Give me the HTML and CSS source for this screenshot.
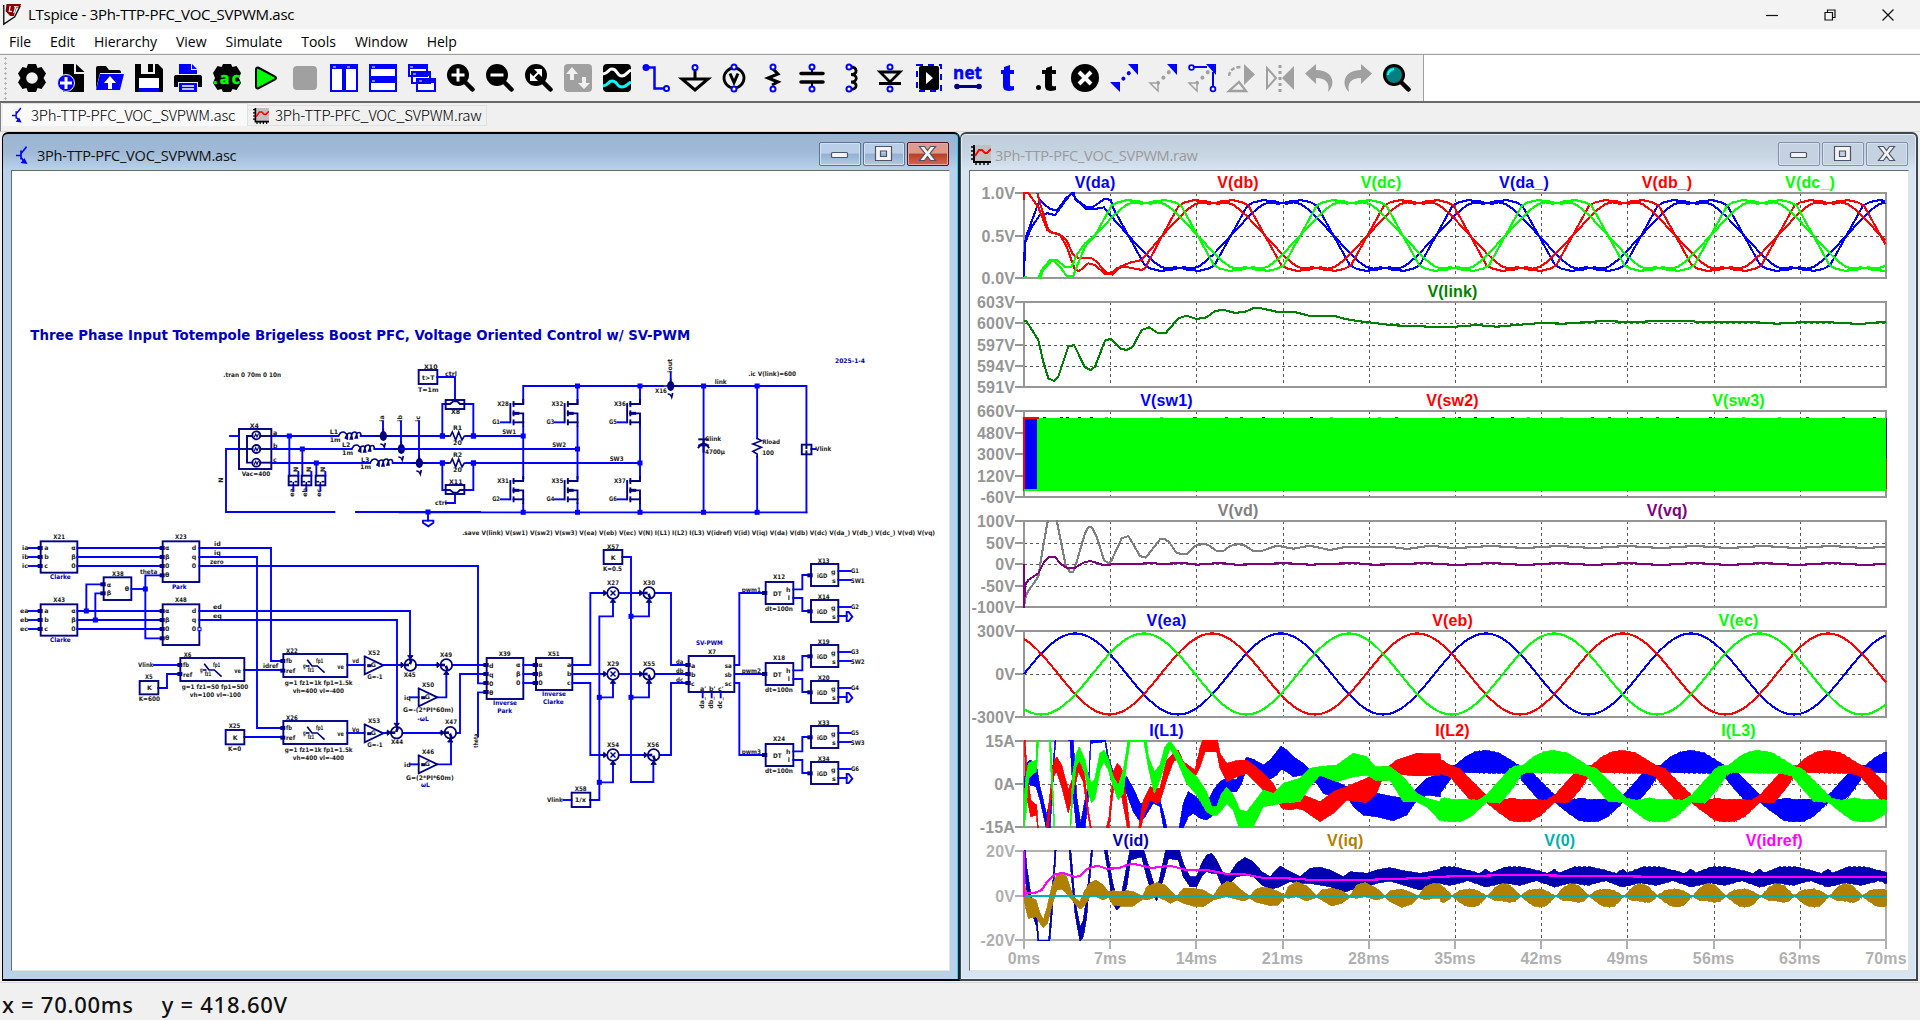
FILE: index.html
```html
<!DOCTYPE html>
<html lang="en">
<head>
<meta charset="utf-8">
<title>LTspice - 3Ph-TTP-PFC_VOC_SVPWM.asc</title>
<link rel="stylesheet" href="styles.css">
</head>
<body>
<svg class="defs" width="0" height="0">
  <symbol id="i-bjt" viewBox="0 0 14 19"><path d="M1 10h5M6 5v9M6 8l5-6V1M6 12l4 5" fill="none" stroke="#0000ff" stroke-width="1.7"/><path d="M5.500 17.500l7 1-3-6z" fill="#0000ff"/></symbol>
  <symbol id="i-raw" viewBox="0 0 20 20"><path d="M2 0h18v17H2z" fill="#c0c0c0"/><path d="M3 0v17h17" fill="none" stroke="#000" stroke-width="2"/><path d="M0 2h3M0 6h3M0 10h3M0 14h3M5 20v-3M9 20v-3M13 20v-3M17 20v-3" stroke="#000" stroke-width="1.500"/><path d="M4 11l4-6h3l3 3h2l4-4" fill="none" stroke="#f00" stroke-width="2"/></symbol>
  <symbol id="i-lens" viewBox="0 0 28 28"><circle cx="11" cy="11" r="11"/><path d="M18 18l7.500 7.500" stroke="#000" stroke-width="4.500" stroke-linecap="round"/></symbol>
</svg>

<header class="titlebar">
  <svg class="logo" viewBox="0 0 22 24"><path d="M2 1v21L14 14 20 2" fill="none" stroke="#111" stroke-width="1.500"/><path d="M5 0h16l-2 4h-3l-3 9h-4L4 8l1-8" fill="#8b0000"/><path d="M9 2L8 8h3M13 3h5M15 3l-2 7" fill="none" stroke="#fff" stroke-width="1.300"/></svg>
  <span class="title-text">LTspice - 3Ph-TTP-PFC_VOC_SVPWM.asc</span>
  <div class="sys">
    <svg viewBox="0 0 14 14"><path d="M1 7.500h12" /></svg>
    <svg viewBox="0 0 14 14"><path d="M2 4.500h7.500V12H2zM4.500 4V2H12v7.500H10"/></svg>
    <svg viewBox="0 0 14 14"><path d="M1.500 1.500l11 11M12.500 1.500l-11 11"/></svg>
  </div>
</header>
<nav class="menubar"><span>File</span><span>Edit</span><span>Hierarchy</span><span>View</span><span>Simulate</span><span>Tools</span><span>Window</span><span>Help</span></nav>

<div class="toolrow"><div class="toolbar">
  <svg viewBox="0 0 28 28"><path d="M10 0h8l1.500 4 4-1 4.500 6.500-2.500 4.500 2.500 4.500-4.500 6.500-4-1-1.500 4h-8l-1.500-4-4 1L0 18.500 2.500 14 0 9.500 4.500 3l4 1z"/><circle cx="14" cy="14" r="5.800" fill="#f0f0f0"/></svg>
  <svg viewBox="0 0 28 28"><path d="M6 0h11v10h10v18H6z"/><path d="M19 0l8.500 8H19z"/><circle cx="9" cy="19" r="8.500" fill="#00f" stroke="#f0f0f0" stroke-width="1"/><path d="M9 13v12M3 19h12" stroke="#fff" stroke-width="3"/></svg>
  <svg viewBox="0 0 28 28"><path d="M0 25V4q0-2 2-2h8l3 4h10q2 0 2 3H4z"/><path d="M4 10h24l-4 16H0z" fill="#00f"/><path d="M14 12l6 7h-4v6h-4v-6H8z" fill="#fff"/></svg>
  <svg viewBox="0 0 28 28"><path d="M0 0h6v10h14V0h3l5 5v23H0z"/><path d="M13 0h5v8h-5z"/><path d="M4 14h20v14H4z" fill="#fff"/><path d="M4 24h20v4H4z" fill="#00f"/></svg>
  <svg viewBox="0 0 28 28"><path d="M5 10V0h12v6h6v4z" fill="#00f"/><path d="M18 0l5 5h-5z" fill="#00f"/><path d="M0 23V13q0-2 2-2h24q2 0 2 2v10h-4v-5H4v5z"/><path d="M5 19h18v9H5z" fill="#00f"/><path d="M8 22h12M8 25h12" stroke="#fff" stroke-width="1.300"/></svg>
  <svg viewBox="0 0 28 28"><path d="M10 0h8l1.500 3 4-1 4.500 7-2 5 2 5-4.500 7-4-1-1.500 3h-8l-1.500-3-4 1L0 19l2-5-2-5 4.500-7 4 1z"/><text x="0" y="20" class="ac" textLength="27">.ac</text></svg>
  <svg viewBox="0 0 28 28"><path d="M5 3.500l17 9q2 1.500 0 3l-17 9q-2 0-2-2v-17q0-2 2-2z" transform="translate(1)" fill="#00ff00" stroke="#000" stroke-width="2"/></svg>
  <svg viewBox="0 0 28 28"><rect x="2" y="2" width="24" height="24" rx="4" fill="#a0a0a0"/></svg>
  <svg viewBox="0 0 28 28"><g fill="#fff" stroke="#00f" stroke-width="2"><path d="M1 1h12v26H1zM15 1h12v26H15z"/></g><path d="M0 0h28v5H0z" fill="#00f"/><path d="M3 3h3M17 3h3" stroke="#fff"/></svg>
  <svg viewBox="0 0 28 28"><g fill="#fff" stroke="#00f" stroke-width="2"><path d="M1 1h26v12H1zM1 15h26v12H1z"/></g><path d="M0 0h28v5H0zM0 14h28v5H0z" fill="#00f"/><path d="M3 3h3M3 17h3" stroke="#fff"/></svg>
  <svg viewBox="0 0 28 28"><g fill="#fff" stroke="#00f" stroke-width="2"><path d="M1 1h18v11H1zM4 8h18v11H4zM9 15h18v12H9z"/></g><path d="M0 0h20v5H0zM3 7h20v5H3zM8 14h20v5H8z" fill="#00f"/><path d="M2 3h3M5 10h3M11 17h3" stroke="#fff"/></svg>
  <svg viewBox="0 0 28 28"><use href="#i-lens"/><path d="M11 4.500v13M4.500 11h13" stroke="#fff" stroke-width="3"/></svg>
  <svg viewBox="0 0 28 28"><use href="#i-lens"/><path d="M4.500 11h13" stroke="#fff" stroke-width="3"/></svg>
  <svg viewBox="0 0 28 28"><use href="#i-lens"/><path d="M7 15l8-8" stroke="#fff" stroke-width="2"/><path d="M9 5h8v8zM5 9v8h8z" fill="#fff"/></svg>
  <svg viewBox="0 0 28 28"><rect width="28" height="28" rx="4" fill="#a0a0a0"/><path d="M8 3l6 7h-4v6H6v-6H2zM20 25l6-6h-4v-6h-4v6h-4z" fill="#f0f0f0"/></svg>
  <svg viewBox="0 0 28 28"><rect width="28" height="28" rx="4"/><path d="M0 10c6-1 5-5 9-5 6 0 4 7 10 7 4 0 5-4 9-6" fill="none" stroke="#fff" stroke-width="3"/><path d="M0 22c6-1 5-5 9-5 6 0 4 6 10 6 4 0 5-3 9-5" fill="none" stroke="#00ffff" stroke-width="3"/></svg>
  <svg viewBox="0 0 28 28"><path d="M3 3.500h9.500v21H22" fill="none" stroke="#00f" stroke-width="2.500"/><circle cx="4" cy="3.500" r="3.500" fill="#00f"/><circle cx="24.500" cy="24.500" r="2.500" fill="#fff" stroke="#00f" stroke-width="2"/></svg>
  <svg viewBox="0 0 28 28"><path d="M14 6v9M1 15h26L14 26z" fill="#f0f0f0" stroke="#000" stroke-width="3"/><circle cx="14" cy="3.500" r="2.500" fill="#fff" stroke="#00f" stroke-width="2"/></svg>
  <svg viewBox="0 0 28 28"><circle cx="14" cy="14" r="10" fill="none" stroke="#000" stroke-width="2.800"/><path d="M10 9.500l4 9 4-9" fill="none" stroke="#000" stroke-width="3"/><g fill="#fff" stroke="#00f" stroke-width="2"><circle cx="14" cy="3" r="2.500"/><circle cx="14" cy="25" r="2.500"/></g></svg>
  <svg viewBox="0 0 28 28"><path d="M14 5l5 5-10 4 10 4-6 3" fill="none" stroke="#000" stroke-width="3"/><g fill="#fff" stroke="#00f" stroke-width="2"><circle cx="14" cy="3" r="2.500"/><circle cx="14" cy="25" r="2.500"/></g></svg>
  <svg viewBox="0 0 28 28"><path d="M3 9.500h22M3 18h22" stroke="#000" stroke-width="3.500" stroke-linecap="round"/><path d="M14 5v4M14 19v4" stroke="#000" stroke-width="2"/><g fill="#fff" stroke="#00f" stroke-width="2"><circle cx="14" cy="3" r="2.500"/><circle cx="14" cy="25" r="2.500"/></g></svg>
  <svg viewBox="0 0 28 28"><path d="M13 3c8 0 8 7.500 1 7.500 7 0 7 7.500 0 7.500 7 0 7 7.500-1 7.500" fill="none" stroke="#000" stroke-width="2.800"/><g fill="#fff" stroke="#00f" stroke-width="2"><circle cx="12" cy="3" r="2.500"/><circle cx="12" cy="25" r="2.500"/></g></svg>
  <svg viewBox="0 0 28 28"><path d="M4 8h20L14 18zM3 19.500h22" fill="#f0f0f0" stroke="#000" stroke-width="2.800"/><g fill="#fff" stroke="#00f" stroke-width="2"><circle cx="14" cy="3" r="2.500"/><circle cx="14" cy="25" r="2.500"/></g></svg>
  <svg viewBox="0 0 28 28"><rect x="4" y="2" width="20" height="24" rx="2"/><rect x="2" y="1" width="24" height="26" fill="none" stroke="#00f" stroke-width="2" stroke-dasharray="6 5"/><path d="M11 8l7 6-7 6z" fill="#fff"/></svg>
  <svg viewBox="0 0 28 28"><text x="-1" y="15" class="net" textLength="29">net</text><path d="M2 22.500h24" stroke="#000080" stroke-width="3"/><circle cx="3" cy="22.500" r="2.800" fill="#000080"/><circle cx="25" cy="22.500" r="2.800" fill="#000080"/></svg>
  <svg viewBox="0 0 28 28"><path d="M10 3l6-2v5h4v4h-4v11q0 2 4 1v4q-11 3-11-4V10H7V6h3z" transform="translate(1)" fill="#00f"/></svg>
  <svg viewBox="0 0 28 28"><path d="M14 4l6-2v4h4v4h-4v11q0 2 4 1v4q-11 3-11-4V10h-3V6h4z"/><circle cx="6.500" cy="23.500" r="2.500"/></svg>
  <svg viewBox="0 0 28 28"><circle cx="14" cy="14" r="14"/><path d="M8 8l12 12M20 8L8 20" stroke="#fff" stroke-width="4"/></svg>
  <svg viewBox="0 0 28 28"><path d="M8 20L20 8" stroke="#00f" stroke-width="4" stroke-linecap="round" stroke-dasharray=".1 7.500"/><path d="M18 0h10v11zM0 18h10v10z" fill="#00f"/></svg>
  <svg viewBox="0 0 28 28"><path d="M9 19L21 7" stroke="#a0a0a0" stroke-width="4" stroke-linecap="round" stroke-dasharray=".1 7.500"/><path d="M18 0h10v11z" fill="#00f"/><path d="M1 19h8v8z" fill="#f0f0f0" stroke="#a0a0a0" stroke-width="1.500"/></svg>
  <svg viewBox="0 0 28 28"><path d="M9 19L21 7" stroke="#a0a0a0" stroke-width="4" stroke-linecap="round" stroke-dasharray=".1 7.500"/><path d="M5 3h14M25 8v14" stroke="#00f" stroke-width="2"/><path d="M18 0h10v11z" fill="#00f"/><path d="M1 19h8v8z" fill="#f0f0f0" stroke="#a0a0a0" stroke-width="1.500"/><g fill="#fff" stroke="#00f" stroke-width="1.800"><circle cx="3.500" cy="3.500" r="2.400"/><circle cx="25" cy="25" r="2.400"/></g></svg>
  <svg viewBox="0 0 28 28"><path d="M17 0l11 10.500L17 21z" fill="#a0a0a0"/><path d="M2 27h17l-7-9zM2 14q0-11 12-11" fill="none" stroke="#a0a0a0" stroke-width="2.300"/><path d="M2 14q0-11 12-11" fill="none" stroke="#f0f0f0" stroke-width="3" stroke-dasharray="2 4"/></svg>
  <svg viewBox="0 0 28 28"><path d="M28 2v24L16 14z" fill="#a0a0a0"/><path d="M1 4v20l9-10z" fill="none" stroke="#a0a0a0" stroke-width="2"/><path d="M14 1v27" stroke="#a0a0a0" stroke-width="3" stroke-dasharray="3 3"/></svg>
  <svg viewBox="0 0 28 28"><path d="M0 9.500L11 0v6c18 0 20 15 12 22 2-9-2-14-12-14v6z" fill="#a0a0a0"/></svg>
  <svg viewBox="0 0 28 28"><path d="M28 9.500L17 0v6C-1 6-3 21 5 28 3 19 7 14 17 14v6z" fill="#a0a0a0"/></svg>
  <svg viewBox="0 0 28 28"><use href="#i-lens"/><circle cx="11" cy="11" r="8" fill="#008080"/><path d="M5 11q0-5 6-6" fill="none" stroke="#00ffff" stroke-width="2"/></svg>
</div></div>

<div class="tabs">
  <div class="tab active"><svg class="bjt"><use href="#i-bjt"/></svg><span>3Ph-TTP-PFC_VOC_SVPWM.asc</span></div>
  <div class="tab"><svg class="raw"><use href="#i-raw"/></svg><span>3Ph-TTP-PFC_VOC_SVPWM.raw</span></div>
</div>

<main class="mdi">
  <section class="win focused">
    <div class="wintitle">
      <svg class="bjt"><use href="#i-bjt"/></svg><span>3Ph-TTP-PFC_VOC_SVPWM.asc</span>
      <div class="btns">
        <i><svg viewBox="0 0 42 24"><rect x="12.500" y="10.500" width="16" height="5" rx="1"/></svg></i>
        <i><svg viewBox="0 0 42 24"><path d="M12.500 4.500h16v14h-16zM17.500 9v5.500h6V9z" fill-rule="evenodd"/></svg></i>
        <i class="close"><svg viewBox="0 0 42 24"><path d="M12.500 4.500h5l3 4 3-4h5l-5.500 7 5.500 7h-5l-3-4-3 4h-5l5.500-7z"/></svg></i>
      </div>
    </div>
    <div class="canvas"><svg id="schematic" viewBox="12 171 937 799"></svg></div>
  </section>
  <section class="win">
    <div class="wintitle">
      <svg class="raw"><use href="#i-raw"/></svg><span>3Ph-TTP-PFC_VOC_SVPWM.raw</span>
      <div class="btns">
        <i><svg viewBox="0 0 42 24"><rect x="12.500" y="10.500" width="16" height="5" rx="1"/></svg></i>
        <i><svg viewBox="0 0 42 24"><path d="M12.500 4.500h16v14h-16zM17.500 9v5.500h6V9z" fill-rule="evenodd"/></svg></i>
        <i><svg viewBox="0 0 42 24"><path d="M12.500 4.500h5l3 4 3-4h5l-5.500 7 5.500 7h-5l-3-4-3 4h-5l5.500-7z"/></svg></i>
      </div>
    </div>
    <div class="canvas"><svg id="plots" viewBox="970 171 938 799"></svg></div>
  </section>
</main>
<footer class="status"><span>x = 70.00ms</span><span>y = 418.60V</span></footer>
<script src="app.js"></script>
</body>
</html>
```
FILE: styles.css
```css
* { box-sizing: border-box; }
body {
  margin: 0; width: 1920px; height: 1020px; overflow: hidden;
  display: flex; flex-direction: column;
  background: #f0f0f0; color: #000;
  font-family: "Open Sans", "Noto Sans", sans-serif;
}
.defs { position: absolute; }
span { white-space: nowrap; }

.titlebar { height: 29px; flex: none; background: #f3f3f3; display: flex; align-items: center; padding-left: 1px; }
.logo { width: 22px; height: 22px; margin-right: 5px; }
.title-text { font-size: 15px; letter-spacing: -0.28px; line-height: 29px; }
.sys { margin-left: auto; display: flex; gap: 44px; padding-right: 25px; }
.sys svg { width: 14px; height: 14px; fill: none; stroke: #111; stroke-width: 1.2; }

.menubar { height: 25px; flex: none; background: #fff; border-bottom: 1px solid #f0f0f0; display: flex; gap: 19px; padding-left: 9px; font-size: 14px; line-height: 25px; letter-spacing: -0.02px; }

.toolrow { height: 49px; flex: none; background: #fff; border-top: 1px solid #a0a0a0; border-bottom: 2px solid #696969; display: flex; }
.toolbar { width: 1424px; background: #f0f0f0; border-right: 1px solid #a0a0a0; display: flex; gap: 11px; align-items: flex-start; padding: 9px 0 0 18px; background-image: radial-gradient(circle at 1.5px 1.5px, #b8b8b8 1.2px, transparent 1.4px); background-size: 6px 5px; background-repeat: repeat-y; background-position: 4px 2px; }
.toolbar svg { width: 28px; height: 28px; flex: none; overflow: visible; }
.ac { font: bold 16px "Open Sans", sans-serif; fill: #00ff00; stroke: #00ff00; stroke-width: .5; }
.net { font: bold 17px "Open Sans", sans-serif; fill: #0000ff; stroke: #0000ff; stroke-width: .5; }

.tabs { height: 29px; flex: none; display: flex; align-items: flex-start; padding-left: 2px; border-bottom: 1px solid #d8d8d8; border-left: 1px solid #808080; font: 300 15px "Noto Sans CJK JP", sans-serif; letter-spacing: -0.22px; }
.tab { display: flex; align-items: center; margin-top: 2px; width: 239px; height: 21px; border: 1px solid #e0e0e0; border-left: 0; padding-left: 5px; }
.tab span { line-height: 19px; position: relative; top: -1px; }
.tab.active { width: 245px; height: 23px; margin-top: 0; background: #f9f9f9; border-bottom: 0; padding-left: 8px; }
.tab .bjt { width: 12px; height: 16px; margin-right: 8px; }
.tab .raw { width: 16px; height: 16px; margin-right: 6px; }

.mdi { height: 850px; flex: none; display: grid; grid-template-columns: 958px 958px; background: #efefef; padding: 0 0 1px 2px; }
.win { border: 1px solid #40464e; border-width: 2px 2px 2px 1px; background: #d7e4f2; display: flex; flex-direction: column; padding: 0 7px 8px 8px; border-radius: 6px 6px 0 0; background-image: linear-gradient(#bfcddb 0, #c8d5e3 22px, #d7e4f2 36px); box-shadow: inset 0 0 0 1px #e4edf6; }
.win.focused { border-color: #000; background: #b9d1ea linear-gradient(#9ab4d2 0, #9fb9d6 18px, #b9d1ea 36px); border-right-color: #102530; box-shadow: inset -1px 0 #35cfee; padding-right: 8px; }
.wintitle { height: 36px; flex: none; display: flex; align-items: center; font-size: 14.6px; letter-spacing: -0.26px; padding: 5px 1px 0 2px; color: #9a9a9a; }
.wintitle > span { line-height: 30px; }
.focused .wintitle { color: #111; }
.wintitle .bjt { width: 14px; height: 20px; margin-right: 8px; }
.wintitle .raw { width: 20px; height: 20px; margin-right: 4px; }
.focused .wintitle { padding-left: 4px; }
.btns { margin-left: auto; display: flex; gap: 2px; }
.btns i { width: 42px; height: 24px; border: 1px solid #8292ac; border-radius: 2px; display: block; box-shadow: inset 0 0 0 1px #d6e1ee; background: #c5d2e1; margin-top: -2px; }
.btns svg { display: block; width: 42px; height: 24px; margin: -1px; fill: #f4f4f4; stroke: #4d5468; stroke-width: 1.2; }
.focused .btns i { background: linear-gradient(#b9cfe7 46%, #93b0d2 50%, #b0cae6); border-color: #5c7494; }
.focused .btns .close { background: linear-gradient(#dd9b90 46%, #b83f26 50%, #cf6a50); border-color: #4d1520; box-shadow: inset 0 0 0 1px #e9a99c; }
.canvas { flex: 1; background: #fff; border: 1px solid #696969; border-right-color: #e3e3e3; border-bottom-color: #e3e3e3; overflow: hidden; }
.canvas svg { display: block; width: 100%; height: 100%; }

.status { flex: 1; display: flex; gap: 28px; padding: 2px 0 0 2px; font: 500 22px "Noto Sans", sans-serif; letter-spacing: .72px; line-height: 38px; color: #111; border-top: 1px solid #d8d8d8; }

#schematic text { font: bold 6.3px "DejaVu Sans", Verdana, sans-serif; fill: #222; }
#schematic text.note { fill: #0000b4; }
#schematic text.head { font: bold 14.6px "DejaVu Sans Condensed", "DejaVu Sans", Tahoma, sans-serif; fill: #0000c0; }
#plots text { font: bold 16px "Liberation Sans", Arial, sans-serif; letter-spacing: .15px; }
```
FILE: app.js
```js
const NS = 'http://www.w3.org/2000/svg';
function el(parent, name, attrs, text) {
  const e = document.createElementNS(NS, name);
  for (const k in attrs) e.setAttribute(k, attrs[k]);
  if (text !== undefined) e.textContent = text;
  parent.appendChild(e);
  return e;
}

/* ---------------- Schematic ---------------- */
const sch = document.getElementById('schematic');
const WIRE = '#0000ff', SYM = '#000080';
let ox = 0, oy = 0, kx = 3;
// Each sheet section has its own origin and horizontal unit
function section(x, y, k = 3) { ox = x; oy = y; kx = k; }
const X = x => +(ox + x / kx).toFixed(2);
const Y = y => +(oy + y / 3).toFixed(2);
function line(str, color = WIRE, w = 1.9, fill = 'none') {
  str.split(';').forEach(s => {
    const n = s.trim().split(/[\s,]+/).map(Number), p = [];
    for (let i = 0; i < n.length; i += 2) p.push(X(n[i]) + ',' + Y(n[i + 1]));
    el(sch, 'polyline', { points: p.join(' '), fill, stroke: color, 'stroke-width': w, 'stroke-linecap': 'square' });
  });
}
const sym = (s, w = 1.9) => line(s, SYM, w);
function dots(s) {
  s.split(';').forEach(p => { const [x, y] = p.trim().split(' ').map(Number); el(sch, 'rect', { x: X(x) - 2.5, y: Y(y) - 2.5, width: 5, height: 5, fill: WIRE }); });
}
function box(a, b, c, d) { el(sch, 'rect', { x: X(a), y: Y(b), width: X(c) - X(a), height: Y(d) - Y(b), fill: 'none', stroke: SYM, 'stroke-width': 1.9 }); }
function circ(x, y, r) { el(sch, 'circle', { cx: X(x), cy: Y(y), r, fill: 'none', stroke: SYM, 'stroke-width': 1.8 }); }
// Text by baseline; w stretches to a width, rot turns it upright
function t(x, y, s, w, cls, rot) {
  const a = { x: X(x), y: Y(y) };
  if (w) { a.textLength = w / kx; a.lengthAdjust = 'spacingAndGlyphs'; }
  if (cls) a.class = cls;
  if (rot) a.transform = `rotate(-90 ${X(x)} ${Y(y)})`;
  el(sch, 'text', a, s);
}
function coil(x, y) {
  const a = X(x), b = Y(y);
  el(sch, 'path', { d: `M${a} ${b}l2-3q3-2 5 0l2 2l0 4l-2-1l2-4q3-2 4 0l1 5l-2 0l2-6q3-2 4 0l1 5l-2 0l2-5q2-1 3 0l1 3`, fill: 'none', stroke: SYM, 'stroke-width': 1.6 });
}
function probe(x, y) {
  el(sch, 'ellipse', { cx: X(x), cy: Y(y), rx: 3.6, ry: 5, fill: SYM });
  line(`${x} ${y} ${x} ${y - 20}`, SYM, 1.6);
  const a = X(x), b = Y(y);
  el(sch, 'path', { d: `M${a - 8} ${b}h16M${a - 3} ${b + 8}q3 0 4 3l1-4`, fill: 'none', stroke: SYM, 'stroke-width': 1.7 });
}
function res(x, y) { sym(`${x} ${y} ${x + 6} ${y} ${x + 12} ${y - 12} ${x + 22} ${y + 12} ${x + 31} ${y - 12} ${x + 41} ${y + 12} ${x + 48} ${y} ${x + 56} ${y}`, 1.6); }

section(0, 300);
t(91, 120, 'Three Phase Input Totempole Brigeless Boost PFC, Voltage Oriented Control w/ SV-PWM', 1980, 'head');
t(670, 232, '.tran 0 70m 0 10n', 173);
box(717, 387, 814, 507);
line('690 408 717 408;717 447 678 447 678 636 1003 636;1068 636 1440 636;814 408 1015 408;814 447 1055 447;814 489 1110 489;868 408 868 527;907 447 907 527;949 489 949 527');
sym('757 408 741 408 741 488 757 488;717 447 757 447;781 408 814 408;781 447 814 447;781 488 814 488');
[[406], [447], [488]].forEach(([y]) => { circ(769, y, 4); sym(`763 ${y + 5} 767 ${y - 4} 771 ${y + 5} 775 ${y - 4}`, 1.1); });
dots('868 408;907 447;949 489;1327 408;1420 408;1327 489;1420 489;1284 636');
[866, 905, 947].forEach((x, i) => {
  box(x, 527, x + 29, 556);
  line(`${x + 29} 527 ${x + 29} 516;${x + 14} 556 ${x + 14} 572`);
  sym(`${x + 4} 545 ${x + 8} 545;${x + 20} 545 ${x + 24} 545;${x + 14} 556 ${x + 14} 548`, 1.6);
  t(x + 28, 516, 'N', 0, '', 1); t(x + 17, 590, ['ea', 'eb', 'ec'][i], 0, '', 1);
});
t(670, 548, 'N', 0, '', 1);
t(749, 383, 'X4'); t(725, 529, 'Vac=400', 86);
t(819, 404, 'a'); t(819, 443, 'b'); t(819, 486, 'c');
t(989, 401, 'L1'); t(989, 425, '1m'); t(1026, 442, 'L2'); t(1026, 464, '1m'); t(1083, 485, 'L3'); t(1080, 506, '1m');
coil(1015, 408); coil(1055, 447); coil(1110, 489);
line('1082 408 1345 408;1123 447 1440 447;1178 489 1345 489;1400 408 1440 408;1400 489 1440 489;1149 365 1149 395;1203 365 1203 435;1257 365 1257 475');
probe(1150, 408); probe(1204, 447); probe(1258, 489);
t(1153, 365, 'ia', 0, '', 1); t(1207, 365, 'ib', 0, '', 1); t(1261, 365, 'ic', 0, '', 1);
res(1345, 408); res(1345, 489);
t(1359, 389, 'R1'); t(1359, 436, '20'); t(1359, 470, 'R2'); t(1359, 517, '20');
box(1256, 210, 1312, 252); t(1272, 206, 'X10'); t(1266, 239, 't>T'); t(1254, 275, 'T=1m'); t(1335, 227, 'ctrl');
line('1312 231 1365 231 1365 300;1327 408 1327 312 1337 312;1393 312 1420 312 1420 408;1327 489 1327 570 1337 570;1393 570 1420 570 1420 489;1365 582 1365 609 1338 609');
box(1337, 300, 1393, 327); box(1337, 555, 1393, 582);
sym('1337 312 1350 312 1360 304 1372 304 1380 312 1393 312;1337 570 1350 570 1360 578 1372 578 1380 570 1393 570');
t(1353, 343, 'X8'); t(1347, 551, 'X11'); t(1305, 616, 'ctrl');
line('1284 636 1284 662;1269 662 1300 662 1300 668 1285 679 1269 668 1269 662');

section(400, 340, 2.8);
line('345 192 345 138 735 138;770 138 1138 138 1138 314;1138 343 1138 517;0 517 1138 517;0 327 497 327;186 288 345 288;186 369 672 369;497 138 497 192;672 138 672 192;850 138 850 517;1000 138 1000 295;1000 350 1000 517;1152 327 1163 327;758 98 758 120');
dots('119 288;206 288;119 369;206 369;345 288;497 327;672 369;497 138;672 138;850 138;1000 138;345 517;497 517;672 517;850 517;1000 517');
[[345, 'X28', 'X31', 'G1', 'G2'], [497, 'X32', 'X35', 'G3', 'G4'], [672, 'X36', 'X37', 'G5', 'G6']].forEach(([x, a, b, g, h]) => {
  line(`${x} 262 ${x} 415;${x} 490 ${x} 517`);
  [[0, a, g], [231, b, h]].forEach(([d, n, gate]) => {
    sym(`${x} ${180 + d} ${x} ${192 + d} ${x - 27} ${192 + d};${x - 27} ${186 + d} ${x - 27} ${198 + d};${x - 27} ${220 + d} ${x} ${220 + d} ${x} ${258 + d};${x - 27} ${214 + d} ${x - 27} ${226 + d};${x - 27} ${247 + d} ${x} ${247 + d};${x - 27} ${241 + d} ${x - 27} ${253 + d};${x - 36} ${192 + d} ${x - 36} ${247 + d}`);
    sym(`${x - 25} ${220 + d} ${x - 15} ${220 + d}`, 3);
    line(`${x - 63} ${247 + d} ${x - 38} ${247 + d}`);
    t(x - 73, 199 + d, n, 33); t(x - 87, 252 + d, gate, 22);
  });
});
t(286, 283, 'SW1', 39); t(426, 322, 'SW2', 39); t(587, 364, 'SW3', 39);
probe(758, 138); t(761, 98, 'iout', 0, '', 1); t(714, 160, 'X16', 33);
t(881, 133, 'link', 34); t(975, 107, '.ic V(link)=600', 134); t(1218, 70, '2025-1-4', 84, 'note');
sym('838 298 862 298;838 316 862 316;836 322 842 314 850 310 858 314 864 322;850 300 850 306;850 318 850 335', 2);
t(854, 303, 'Clink', 45); t(854, 341, '4700µ', 56);
sym('1000 295 1012 302 988 312 1012 322 988 334 1000 342 1000 350', 1.6);
t(1014, 313, 'Rload', 50); t(1014, 346, '100', 33);
box(1125, 314, 1152, 343); sym('1138 319 1138 324;1138 334 1138 338', 2); t(1163, 334, 'Vlink', 44);
t(174, 584, '.save V(link) V(sw1) V(sw2) V(sw3) V(ea) V(eb) V(ec) V(N) I(L1) I(L2) I(L3) V(idref) V(id) V(iq) V(da) V(db) V(dc) V(da_) V(db_) V(dc_) V(vd) V(vq)', 1324);

section(0, 510);
[[94, 'X21', ['ia', 'ib', 'ic'], 208], [283, 'X43', ['ea', 'eb', 'ec'], 397]].forEach(([y, n, ins, cy]) => {
  box(122, y, 232, y + 94); t(160, y - 6, n, 35); t(150, cy, 'Clarke', 62, 'note');
  ['a', 'b', 'c'].forEach((s, i) => {
    const yy = y + 20 + i * 27;
    line(`86 ${yy} 120 ${yy};232 ${yy} 488 ${yy}`); sym(`119 ${yy} 122 ${yy}`, 4);
    sym(`485 ${yy} 488 ${yy}`, 4);
    t(133, yy + 7, s); t(n === 'X21' ? 66 : 60, yy + 7, ins[i]); t(214, yy + 5, 'αβ0'[i]);
  });
});
[[94, 'X23'], [283, 'X48']].forEach(([y, n]) => {
  box(488, y, 598, y + 122); t(525, y - 6, n, 35);
  ['α', 'β', '0', 'θ'].forEach((s, i) => t(495, y + 27 + i * 27, s));
  ['d', 'q', '0'].forEach((s, i) => t(575, y + 27 + i * 27, s));
});
t(516, 236, 'Park', 44, 'note');
box(311, 202, 394, 270); t(336, 197, 'X38', 35); t(320, 230, 'α'); t(320, 256, 'β'); t(374, 243, 'θ'); t(420, 192, 'theta', 52);
line('259 303 259 223 309 223;286 330 286 250 309 250;394 237 436 237;488 196 436 196 436 385 488 385;462 465 541 465;475 534 501 534 501 492 541 492;733 480 850 480;598 114 813 114 813 453 850 453;598 141 771 141 771 654 850 654;733 681 850 681;1042 465 1093 465;1042 669 1093 669;1150 465 1200 465;1150 669 1170 669');
line('598 168 1434 168 1434 520 1460 520;598 303 1230 303 1230 450;598 330 1191 330 1191 650');
sym('307 223 311 223;307 250 311 250;485 196 488 196;485 385 488 385;538 465 541 465;538 492 541 492;847 453 850 453;847 482 850 482;847 654 850 654;847 683 850 683', 4);
dots('259 303;286 330;436 237'); el(sch, 'rect', { x: X(594), y: Y(353), width: 3, height: 3, fill: '#fff', stroke: WIRE });
t(642, 109, 'id'); t(642, 136, 'iq'); t(630, 163, 'zero', 41); t(639, 298, 'ed'); t(639, 325, 'eq');
[[541, 444, 733, 'X6', 551, 50, 500], [850, 432, 1042, 'X22', 858, '1k', '1.5k'], [850, 633, 1042, 'X26', 858, '1k', '1.5k']].forEach(([x, y, x2, n, nx, fz, fp], i) => {
  box(x, y, x2, y + 69); t(nx, y - 4, n, i ? 35 : 23);
  t(x + 8, y + 28, 'fb', 18); t(x + 8, y + 56, 'ref', 28); t(x + 162, y + 44, 've', 20);
  sym(`${x + 73} ${y + 19} ${x + 86} ${y + 36} ${x + 102} ${y + 36} ${x + 122} ${y + 54};${x + 70} ${y + 36} ${x + 76} ${y + 36}`, 1.6);
  t(x + 98, y + 28, 'fp1', 22); t(x + 73, y + 55, 'fz1', 20); t(x + 59, y + 43, 'g', 8);
  t(x + 4, y + 92, `g=1 fz1=${fz} fp1=${fp}`, i ? 204 : 200); t(x + 28, y + 116, i ? 'vh=400 vl=-400' : 'vh=100 vl=-100', 154);
});
t(414, 472, 'Vlink', 46); box(419, 513, 475, 553); t(435, 508, 'X5', 23); t(441, 541, 'K'); t(416, 574, 'K=600', 64);
box(677, 660, 733, 703); t(686, 655, 'X25', 35); t(698, 689, 'K'); t(684, 724, 'K=0', 40);
t(789, 475, 'idref', 46); t(1057, 460, 'vd', 20); t(1056, 665, 'Vq', 22);
function gain(x, y, n, g) {
  line(`${x} ${y - 27} ${x} ${y + 27} ${x + 56} ${y} ${x} ${y - 27}`, SYM, 1.8);
  sym(`${x + 12} ${y + 1} ${x + 16} ${y + 1}`, 3); t(x + 18, y + 6, 'G'); t(x + 10, y - 32, n, 36); if (g) t(x + 8, y + 42, g, 46);
}
gain(1094, 466, 'X52', 'G=-1'); gain(1094, 670, 'X53', 'G=-1');

section(370, 510);
function node(x, y, up, mul) {
  circ(x, y, 5.8);
  sym(`${x - 30} ${y} ${x - 18} ${y}`, 2); line(`${x - 18} ${y} ${x - 28} ${y - 8} ${x - 28} ${y + 8} ${x - 18} ${y}`, SYM, 1, SYM);
  const s = up ? -1 : 1;
  line(`${x} ${y + s * 18} ${x - 8} ${y + s * 28} ${x + 8} ${y + s * 28} ${x} ${y + s * 18}`, SYM, 1, SYM);
  if (mul) sym(`${x - 6} ${y - 6} ${x + 6} ${y + 6};${x + 6} ${y - 6} ${x - 6} ${y + 6}`, 1.4);
  else sym(`${x - 15} ${y} ${x - 8} ${y};${x} ${y + s * 6} ${x + 3} ${y + s * 14}`, 2.6);
}
line('40 465 100 465;138 465 210 465;248 465 350 465;40 669 60 669;98 669 222 669;260 669 270 669 270 492 350 492;120 562 146 562;202 562 229 562 229 490;120 763 146 763;202 763 243 763 243 690;324 680 324 547 350 547');
node(121, 465, 1); node(229, 465, 0); node(80, 668, 1); node(241, 668, 0);
t(101, 502, 'X45', 36); t(210, 442, 'X49', 36); t(63, 703, 'X44', 36); t(225, 643, 'X47', 36);
gain(146, 562, 'X50'); gain(146, 763, 'X46');
t(102, 569, 'iq'); t(102, 770, 'id'); t(99, 607, 'G=-(2*PI*60m)', 152); t(108, 811, 'G=(2*PI*60m)', 143);
t(142, 634, '-ωL', 34, 'note'); t(153, 830, 'ωL', 26, 'note');
box(350, 444, 460, 567); box(498, 444, 607, 540); t(386, 439, 'X39', 36); t(533, 439, 'X51', 36);
'dq0θ'.split('').forEach((s, i) => { t(357, 473 + i * 27, s); sym(`346 ${465 + i * 27} 350 ${465 + i * 27}`, 4); });
'αβ0'.split('').forEach((s, i) => { t(438, 471 + i * 27, s); t(505, 471 + i * 27, s); t(591, 472 + i * 27, 'abc'[i]); line(`460 ${465 + i * 27} 498 ${465 + i * 27}`); sym(`494 ${465 + i * 27} 498 ${465 + i * 27}`, 4); });
t(369, 586, 'Inverse', 72, 'note'); t(382, 610, 'Park', 44, 'note'); t(516, 559, 'Inverse', 72, 'note'); t(519, 583, 'Clarke', 62, 'note');
t(325, 713, 'theta', 42, '', 1);
line('607 465 661 465 661 249 700 249;607 492 700 492;607 519 661 519 661 735 700 735;660 870 688 870 688 319 729 319 729 280;688 562 729 562 729 520;688 817 729 817 729 765;757 141 783 141 783 816 850 816 850 765;783 319 837 319 837 280;783 562 837 562 837 520;748 249 810 249;748 492 810 492;748 735 824 735;855 249 903 249 903 465 955 465;855 492 955 492;869 735 903 735 903 519 955 519;580 870 604 870');
dots('688 562;688 817;783 319;783 562');
node(729, 249, 0, 1); node(729, 492, 0, 1); node(729, 735, 0, 1); node(837, 249, 0); node(837, 492, 0); node(851, 735, 0);
t(711, 226, 'X27', 36); t(711, 469, 'X29', 36); t(711, 712, 'X54', 36); t(819, 226, 'X30', 36); t(819, 469, 'X55', 36); t(831, 712, 'X56', 36);
box(701, 120, 757, 162); t(711, 116, 'X57', 36); t(722, 149, 'K'); t(699, 184, 'K=0.5', 57);
box(605, 848, 661, 891); t(614, 844, 'X58', 36); t(614, 877, '1/x', 34); t(531, 877, 'Vlink', 47);
box(956, 438, 1093, 546); t(978, 406, 'SV-PWM', 80, 'note'); t(1014, 433, 'X7', 24);
['a', 'b', 'c'].forEach((s, i) => {
  t(963, 473 + i * 27, s); t(1064, 473 + i * 27, 's' + s, 21); t(918, 461 + i * 27, 'd' + s, 22);
  t(990 + i * 27, 542, s + "'"); line(`${998 + i * 27} 548 ${998 + i * 27} 562`); t(1002 + i * 27, 596, 'd' + s + '_', 0, '', 1);
  sym(`952 ${465 + i * 27} 956 ${465 + i * 27}`, 4);
});

section(640, 520);
line('284 435 298 435 298 219 376 219;284 462 376 462;284 489 298 489 298 705 376 705');
[[186, 'X12', 'X13', 'X14', 1], [429, 'X18', 'X19', 'X20', 2], [672, 'X24', 'X33', 'X34', 3]].forEach(([y, n, a, b, k]) => {
  t(305, y + 29, 'pwm' + k, 58); sym(`372 ${y + 33} 376 ${y + 33}`, 4);
  box(377, y, 460, y + 66); t(399, y - 10, n, 36); t(399, y + 41, 'DT', 26); t(438, y + 29, 'h'); t(443, y + 55, 'l'); t(375, y + 86, 'dt=100n', 84);
  line(`460 ${y + 22} 487 ${y + 22} 487 ${y - 21} 512 ${y - 21};460 ${y + 48} 487 ${y + 48} 487 ${y + 87} 512 ${y + 87}`);
  sym(`508 ${y - 20} 512 ${y - 20};508 ${y + 88} 512 ${y + 88}`, 4);
  [[y - 54, a], [y + 54, b]].forEach(([q, m], j) => {
    box(513, q, 595, q + 66); t(533, q - 4, m, 36); t(531, q + 41, 'iGD', 31); t(573, q + 30, 'g'); t(576, q + 56, 's');
    line(`595 ${q + 21} 632 ${q + 21};595 ${q + 48} ${j ? 620 : 632} ${q + 48}`);
    t(633, q + 28, 'G' + (2 * k - 1 + j), 24);
    if (j) line(`620 ${q + 36} 626 ${q + 36} 637 ${q + 50} 626 ${q + 63} 620 ${q + 63} 620 ${q + 36}`);
    else t(632, q + 56, 'SW' + k, 42);
  });
});

/* ---------------- Waveform panes ---------------- */
const pl = document.getElementById('plots');
const X0 = 1024, X1 = 1886, PXMS = (X1 - X0) / 70;
const GRAY = '#969696', LIGHT = '#b0b0b0';
const B = '#0000ff', R = '#ff0000', G = '#00ff00';
const panes = [
  { y: [193, 278], ticks: [[193, '1.0V'], [236, '0.5V'], [278, '0.0V']], names: [['V(da)', B], ['V(db)', R], ['V(dc)', G], ['V(da_)', B], ['V(db_)', R], ['V(dc_)', G]] },
  { y: [302, 387], ticks: [[302, '603V'], [323, '600V'], [345, '597V'], [366, '594V'], [387, '591V']], names: [['V(link)', '#008000']] },
  { y: [411, 497], ticks: [[411, '660V'], [433, '480V'], [454, '300V'], [476, '120V'], [497, '-60V']], names: [['V(sw1)', B], ['V(sw2)', R], ['V(sw3)', G]] },
  { y: [521, 607], ticks: [[521, '100V'], [543, '50V'], [564, '0V'], [586, '-50V'], [607, '-100V']], names: [['V(vd)', '#808080'], ['V(vq)', '#800080']] },
  { y: [631, 717], ticks: [[631, '300V'], [674, '0V'], [717, '-300V']], names: [['V(ea)', B], ['V(eb)', R], ['V(ec)', G]] },
  { y: [741, 827], ticks: [[741, '15A'], [784, '0A'], [827, '-15A']], names: [['I(L1)', B], ['I(L2)', R], ['I(L3)', G]] },
  { y: [851, 940], ticks: [[851, '20V'], [896, '0V'], [940, '-20V']], names: [['V(id)', '#0000b0'], ['V(iq)', '#b08000'], ['V(0)', '#00b0b0'], ['V(idref)', '#ff00ff']], light: 1 }
];
panes.forEach((p, i) => {
  const c = p.light ? LIGHT : GRAY, [a, b] = p.y;
  const g = { stroke: '#585858', 'stroke-width': 1, 'stroke-dasharray': '3 3', 'shape-rendering': 'crispEdges' };
  for (let k = 1; k < 10; k++) el(pl, 'path', { d: `M${Math.round(X0 + 86.2 * k) + .5} ${a}V${b}`, ...g });
  p.ticks.slice(1, -1).forEach(([y]) => el(pl, 'path', { d: `M${X0} ${y + .5}H${X1}`, ...g }));
  el(pl, 'rect', { x: X0, y: a, width: X1 - X0, height: b - a, fill: 'none', stroke: c, 'stroke-width': 2, 'shape-rendering': 'crispEdges' });
  p.ticks.forEach(([y, s]) => {
    el(pl, 'path', { d: `M1015 ${y}H${X0}`, stroke: c, 'stroke-width': 2, 'shape-rendering': 'crispEdges' });
    el(pl, 'text', { x: 1015, y: y + 6, fill: c, 'text-anchor': 'end' }, s);
  });
  p.names.forEach(([s, col], k) => el(pl, 'text', { x: X0 - .5 + (X1 - X0 - 4) * (k + .5) / p.names.length, y: a - 5.5, fill: col, 'text-anchor': 'middle' }, s));
  const cp = el(pl, 'clipPath', { id: 'c' + i });
  el(cp, 'rect', { x: X0 - 1, y: a - 1, width: X1 - X0 + 2, height: b - a + 2 });
  p.g = el(pl, 'g', { 'clip-path': `url(#c${i})` });
});
for (let k = 0; k <= 10; k++) {
  const x = X0 + 86.2 * k;
  el(pl, 'path', { d: `M${Math.round(x)} 940v9`, stroke: LIGHT, 'stroke-width': 2, 'shape-rendering': 'crispEdges' });
  el(pl, 'text', { x, y: 964, fill: LIGHT, 'text-anchor': 'middle' }, 7 * k + 'ms');
}
function trace(i, pts, color) {
  el(panes[i].g, 'polyline', { points: pts.map(p => p[0].toFixed(1) + ',' + p[1].toFixed(1)).join(' '), fill: 'none', stroke: color, 'stroke-width': 2.1, 'stroke-linejoin': 'round', 'shape-rendering': 'crispEdges' });
}
function interp(tab, u, c = 1) {
  for (let i = 1; i < tab.length; i++) if (u <= tab[i][0]) {
    const f = (u - tab[i - 1][0]) / (tab[i][0] - tab[i - 1][0]);
    return tab[i - 1][c] + f * (tab[i][c] - tab[i - 1][c]);
  }
  return tab[tab.length - 1][c];
}
// Samples are stored at three units per pixel from a given origin
const nums = (s, n, x, y) => s.trim().split(/\s+/).map(q => q.split(',').map((v, k) => k ? y + v / 3 : x + v / 3));

// Duty cycles: start-up transient, then the periodic shape
const duty = [[0, .5], [.16, .85], [.22, .89], [.31, .915], [.42, .905], [.49, .88], [.55, .875], [.61, .89], [.68, .87], [.75, .81], [.83, .72], [1, .5]];
function dutyTrace(start, cross, rising, rev, color) {
  const pts = nums(start, 2, 960, 120), c0 = 960 + cross / 3;
  for (let x = c0; x <= X1; x += 1) {
    const h = (x - c0) / 102.6, k = Math.floor(h); let u = h - k;
    if (rev) u = 1 - u;
    const s = (k % 2 === 0) === rising ? 1 : -1;
    pts.push([x, 193 + 85 * (1 - (.5 + s * (interp(duty, u) - .5)))]);
  }
  trace(0, pts, color);
}
dutyTrace('192,470 194,380 198,350 235,250 240,240 270,268 292,270 320,232 342,218 345,238 360,250 380,268 400,268 432,262 450,285', 505, false, false, B);
dutyTrace('192,470 195,370 215,320 240,285 262,280 285,285 318,240 335,220 350,240 380,262 400,260 435,236 452,240 460,265', 505, false, true, B);
dutyTrace('192,240 192,219 205,219 235,262 262,330 275,338 298,342 320,362 338,402 355,415 395,415 410,425 440,460 458,464 480,440 510,428 545,420', 607, true, false, R);
dutyTrace('232,219 240,250 262,320 270,335 300,345 320,380 345,450 358,453 385,430 405,435 435,462 455,458 470,445 495,440 545,450 555,445', 607, true, true, R);
dutyTrace('235,476 245,450 270,420 290,420 315,440 335,440 350,405 375,370', 405, true, false, G);
dutyTrace('240,476 250,450 275,422 285,425 300,440 320,468 340,468 350,440 375,380', 405, true, true, G);
trace(0, [[1024, 277], [1027, 277]], G);

trace(1, nums('192,602 200,605 235,660 250,725 265,775 282,783 295,770 325,680 342,675 375,742 392,750 405,740 435,662 452,656 480,685 500,690 518,680 545,630 568,622 595,640 618,638 655,595 680,587 710,597 740,592 765,573 790,569 825,579 855,575 880,565 895,563 950,575 1000,575 1050,588 1120,587 1160,598 1200,604 1300,616', 2, 960, 120)
  .concat(nums('0,620 75,620 140,615 200,620 330,609 400,611 520,603 600,606 700,603 770,603 830,607 950,605 1040,611 1110,607 1200,607 1290,612 1369,605', 2, 1430, 120)), '#008000');

function rect(i, x, y, w, h, fill) { el(panes[i].g, 'rect', { x, y, width: w, height: h, fill, 'shape-rendering': 'crispEdges' }); }
rect(2, 1023, 417, 16, 74, R); rect(2, 1025, 419, 13, 70, B);
rect(2, 1037, 418, 849, 73, G); rect(2, 1024, 489, 20, 2, G);
rect(2, 1037, 417, 2, 2, R);
[[1043, B], [1060, B], [1066, B], [1078, B], [1090, B], [1105, G], [1160, G], [1193, R], [1225, R], [1240, R], [1262, B], [1310, B], [1330, G], [1378, G], [1395, R], [1442, R], [1458, B], [1474, B], [1491, B], [1511, B], [1527, G], [1560, G], [1591, R], [1608, R], [1640, R], [1656, R], [1676, B], [1709, B], [1725, B], [1742, G], [1778, G], [1806, R], [1842, R], [1873, B]].forEach(([x, c]) => rect(2, x, 417, 3, 1, c));
rect(2, 1886, 418, 1, 40, B); rect(2, 1886, 458, 1, 31, R);

const wave = (x0, y, a, period) => { const r = []; for (let x = x0; x <= X1; x += 2) r.push([x, y + a * Math.sin((x - x0) / period * 6.283)]); return r; };
trace(3, nums('192,620 197,590 205,573 235,530 245,465 262,370 268,350 288,350 300,410 318,500 330,515 340,515 350,485 375,400 385,382 395,382 410,410 432,480 445,490 455,480 485,415 505,408 515,425 540,468 557,473 575,450 600,418 615,416 630,430 650,460 680,462 705,437 730,432 745,435 770,453 790,453 810,438 835,432 855,437 880,453 905,453 950,437 1000,446 1050,437 1110,450 1160,440 1290,440 1340,447 1410,437 1440,440', 2, 960, 400).concat(wave(1440, 547, .7, 68)), '#808080');
trace(3, nums('192,492 192,621 195,555 205,540 235,520 250,490 265,472 285,470 300,490 320,503 345,503 370,488 390,483 405,487 430,495 460,493 540,492 570,488 600,492 670,489 710,494 780,489 830,494 920,492 970,489 1050,494 1180,489 1240,494 1340,492 1390,489 1440,492', 2, 960, 400).concat(wave(1440, 564, .7, 68)), '#800080');

[[0, B], [120, R], [-120, G]].forEach(([ph, c]) => {
  const r = [];
  for (let x = X0; x <= X1; x += 1) r.push([x, 674 - 40.5 * Math.sin(((x - X0) / PXMS * 21.6 + ph) * Math.PI / 180)]);
  trace(4, r, c);
});

// Ripple bands: x, upper, lower
function band(i, start, up, lo, shift, period, x0, color) {
  const pts = nums(start, 3, 960, 700);
  for (let x = x0 + 1; x <= X1 + 1; x += 1) {
    const z = (x - 1400) * 3 - shift - up[0][0], u = up[0][0] + ((z % period) + period) % period;
    const j = (x * 7919 % 5) / 5 * .8;
    pts.push([x, 600 + interp(up, u) / 3 + j, 600 + interp(lo, u) / 3 - j]);
  }
  const d = pts.map(p => p[0].toFixed(1) + ',' + p[1].toFixed(1)).concat(pts.reverse().map(p => p[0].toFixed(1) + ',' + p[2].toFixed(1)));
  el(panes[i].g, 'polygon', { points: d.join(' '), fill: color, stroke: color, 'stroke-width': .8, 'shape-rendering': 'crispEdges' });
}
const up = [[260, 583], [330, 505], [345, 497], [370, 495], [400, 470], [430, 455], [460, 450], [500, 457], [530, 475], [565, 497], [590, 505], [630, 545], [680, 595], [710, 600], [750, 593], [770, 598], [810, 597], [850, 600], [876, 583]];
const lo = [[260, 607], [300, 610], [335, 570], [365, 525], [380, 518], [460, 520], [530, 521], [560, 530], [590, 565], [625, 605], [670, 608], [690, 625], [740, 662], [765, 666], [800, 665], [830, 650], [876, 607]];
band(5, '192,253,360 200,190,240 210,180,255 228,190,260 240,260,300 260,345,390 270,300,390 285,123,150 290,50,100 330,50,123 340,123,290 350,290,390 362,370,400 375,300,383 385,260,300 392,110,130 435,110,125 445,170,190 470,250,265 500,230,280 520,265,335 540,310,365 555,310,350 580,290,310 600,300,320 612,345,390 625,400,450 655,400,450 670,310,383 685,275,350 700,285,340 720,300,355 740,310,360 760,270,345 780,245,310 800,235,275 830,240,275 845,195,250 860,172,200 880,178,215 910,195,230 930,180,238 950,155,225 963,138,208 980,150,215 1000,170,230 1030,190,225 1050,210,240 1070,230,250 1090,230,280 1120,240,290 1160,260,285 1180,280,320 1210,285,345 1250,280,350 1300,290,362 1340,295,345 1370,265,300 1400,235,285 1440,222,290', up, lo, -205, 616, 1440, B);
band(5, '192,60,100 200,200,290 212,300,350 230,315,345 235,390,450 258,390,450 265,330,383 280,190,230 290,170,215 305,195,260 325,270,340 340,230,280 355,180,215 370,195,245 385,330,350 397,400,420 435,400,430 447,350,383 460,215,270 472,190,250 485,205,290 500,300,370 510,390,450 535,390,420 550,300,350 570,260,300 590,265,310 600,265,305 620,180,240 640,160,185 655,150,175 670,185,210 705,210,230 720,145,200 735,100,155 770,110,155 780,160,205 800,190,245 830,182,230 860,180,220 880,195,240 910,220,270 940,250,280 965,300,325 990,310,330 1010,300,325 1030,285,330 1080,305,365 1120,275,340 1160,260,300 1220,235,308 1250,220,280 1265,200,240 1285,200,240 1310,180,222 1370,160,228 1440,162,225', up, lo, 205, 616, 1440, R);
band(5, '192,300,383 198,230,340 205,190,235 228,180,215 232,60,180 236,60,110 268,60,110 272,123,200 278,250,300 284,390,420 330,390,420 338,220,290 348,165,200 358,140,180 375,180,220 385,230,280 395,250,308 405,235,295 420,160,210 432,150,185 445,175,210 460,230,260 475,255,300 490,210,280 500,150,190 510,60,125 552,60,125 565,170,200 583,215,280 600,195,240 615,140,190 630,123,145 650,150,180 680,205,250 710,230,285 740,275,335 755,320,345 770,320,345 785,280,330 800,262,310 820,285,330 840,330,390 860,335,390 880,310,380 910,270,320 940,280,315 970,250,308 1020,235,305 1050,205,260 1080,200,225 1130,195,245 1180,160,230 1220,170,225 1245,200,240 1290,200,240 1330,230,305 1370,280,305 1400,295,320 1440,305,362', up, lo, 0, 616, 1440, G);

const idUp = [[258, 806], [272, 818], [318, 800], [368, 800], [418, 812], [443, 820], [463, 806]];
const idLo = [[258, 862], [298, 852], [315, 850], [358, 857], [410, 843], [463, 862]];
const iqUp = [[262, 888], [285, 862], [305, 850], [330, 855], [345, 870], [362, 886], [385, 870], [420, 866], [440, 872], [467, 888]];
const iqLo = [[262, 890], [285, 903], [305, 903], [330, 908], [345, 905], [362, 890], [385, 908], [400, 918], [420, 922], [440, 918], [467, 890]];
band(6, '192,400,470 200,500,580 215,600,640 230,640,680 236,720,760 266,720,760 275,600,660 285,450,500 290,380,420 325,380,420 335,480,540 345,600,640 360,680,725 370,660,710 380,590,650 392,470,510 400,380,430 430,380,430 445,470,520 458,550,610 470,590,630 485,580,615 500,500,560 512,440,480 545,430,470 560,480,530 575,530,580 590,575,603 600,530,570 615,460,520 625,430,475 655,440,480 670,490,530 690,530,560 710,530,560 725,490,530 740,465,515 755,460,520 770,480,520 790,520,565 810,520,550 830,490,530 855,472,525 880,485,530 905,515,555 930,530,568 960,498,560 990,515,545 1020,530,550 1050,505,550 1080,502,555 1110,510,560 1150,530,578 1170,515,570 1220,520,560 1250,510,550 1290,503,543 1330,512,555 1380,520,570 1410,515,560 1440,508,550', idUp, idLo, 0, 205.2, 1440, '#0000b0');
band(6, '192,550,600 205,590,655 228,600,650 240,640,670 250,660,683 262,620,670 275,560,620 290,525,570 305,520,568 320,530,580 340,590,605 360,605,628 375,570,615 390,548,590 408,540,590 430,555,600 445,575,592 460,572,615 480,575,618 500,572,618 520,575,618 548,590,598 560,560,600 590,548,590 615,555,600 630,570,610 650,590,600 670,565,610 700,565,618 730,570,620 760,588,600 780,558,595 800,545,590 820,548,595 850,575,603 870,588,595 885,570,605 905,562,610 930,565,617 955,575,615 975,585,592 985,560,595 1010,545,590 1040,558,603 1070,588,592 1085,570,600 1115,565,618 1145,572,610 1170,588,592 1190,555,595 1215,548,590 1250,565,600 1275,588,592 1290,572,605 1325,568,622 1355,578,612 1375,588,592 1395,560,600 1420,550,595 1440,552,595', iqUp, iqLo, 0, 205.2, 1440, '#b08000');
trace(6, [[X0, 896], [X1, 896]], '#00b0b0');
trace(6, nums('192,453 192,588 195,578 225,578 245,570 262,545 285,523 308,519 345,531 360,527 385,505 412,497 440,506 475,505 500,495 520,491 575,504 630,497 680,510 740,510 800,522 850,522 910,534 980,535 1060,540 1200,540 1330,536 1440,531', 2, 960, 700)
  .concat(nums('120,830 330,825 760,830 1458,831', 2, 1400, 600)), '#ff00ff');
```
